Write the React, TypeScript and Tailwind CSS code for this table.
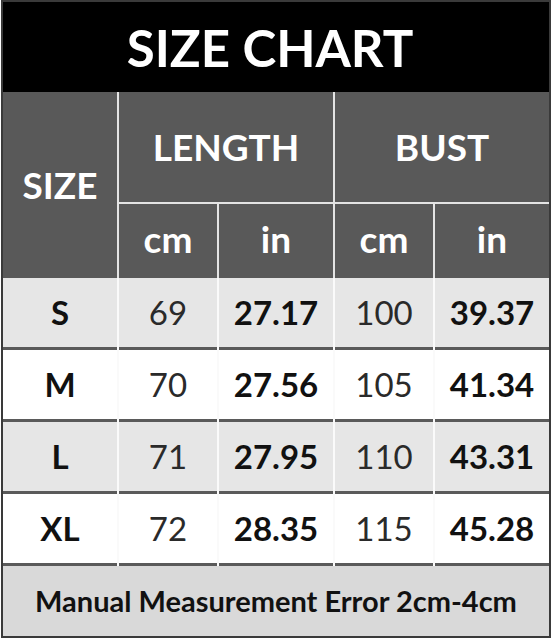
type Row = { size: string; lenCm: string; lenIn: string; bustCm: string; bustIn: string };

const rows: Row[] = [
  { size: "S", lenCm: "69", lenIn: "27.17", bustCm: "100", bustIn: "39.37" },
  { size: "M", lenCm: "70", lenIn: "27.56", bustCm: "105", bustIn: "41.34" },
  { size: "L", lenCm: "71", lenIn: "27.95", bustCm: "110", bustIn: "43.31" },
  { size: "XL", lenCm: "72", lenIn: "28.35", bustCm: "115", bustIn: "45.28" },
];

const cols = "grid grid-cols-[114px_98px_114px_98px_114px] gap-x-[2px]";

export default function App() {
  return (
    <div className="w-[555px] h-[640px] bg-white" style={{ fontFamily: "Lato, 'Open Sans', sans-serif" }}>
      <div className="ml-px w-[550px] border-2 border-[#3a3a3a] bg-[#f4f4f4]">
        {/* Title */}
        <div className="flex h-[90px] items-center justify-center bg-black pr-[12px]">
          <h1 className="text-[51px] font-bold leading-none text-white">SIZE CHART</h1>
        </div>

        {/* Header */}
        <div className={`${cols} grid-rows-[110px_74px] gap-y-[2px] bg-[#e4e4e4]`}>
          <div className="row-span-2 flex items-center justify-center bg-[#595959] text-[37px] font-bold text-white">
            SIZE
          </div>
          <div className="col-span-2 flex items-center justify-center bg-[#595959] text-[37px] font-bold text-white">
            LENGTH
          </div>
          <div className="col-span-2 flex items-center justify-center bg-[#595959] text-[37px] font-bold text-white">
            BUST
          </div>
          {["cm", "in", "cm", "in"].map((u, i) => (
            <div key={i} className="flex items-center justify-center bg-[#595959] pb-1 text-[37px] font-bold text-white">
              {u}
            </div>
          ))}
        </div>

        {/* Data rows */}
        {rows.map((r, i) => {
          const bg = i % 2 === 0 ? "bg-[#e6e6e6]" : "bg-white";
          const cell = `flex h-[72px] items-center justify-center border-b-[3px] border-[#5a5a5a] ${bg} text-[33px]`;
          return (
            <div key={r.size} className={`${cols} bg-[#fafafa]`}>
              <div className={`${cell} font-bold text-[#111]`}>{r.size}</div>
              <div className={`${cell} text-[#2a2a2a]`}>{r.lenCm}</div>
              <div className={`${cell} font-bold text-[#111]`}>{r.lenIn}</div>
              <div className={`${cell} text-[#2a2a2a]`}>{r.bustCm}</div>
              <div className={`${cell} font-bold text-[#111]`}>{r.bustIn}</div>
            </div>
          );
        })}

        {/* Footer */}
        <div className="flex h-[70px] items-center justify-center bg-[#d9d9d9] text-[29px] font-bold text-[#111]">
          Manual Measurement Error 2cm-4cm
        </div>
      </div>
    </div>
  );
}
